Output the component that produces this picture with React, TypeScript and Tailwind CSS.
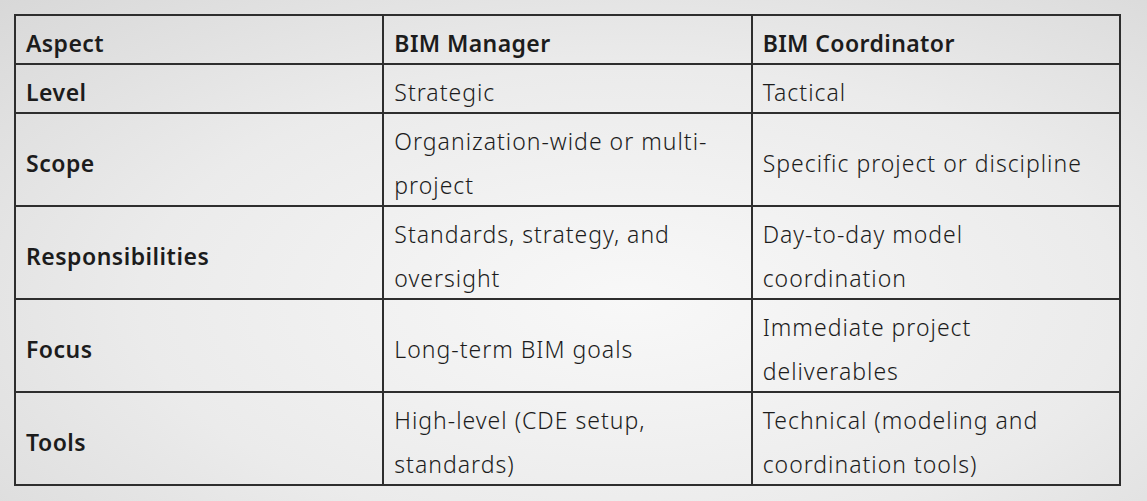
import React from 'react';

const rows = [
  { aspect: 'Level', manager: 'Strategic', coordinator: 'Tactical' },
  { aspect: 'Scope', manager: 'Organization-wide or multi-project', coordinator: 'Specific project or discipline' },
  { aspect: 'Responsibilities', manager: 'Standards, strategy, and oversight', coordinator: 'Day-to-day model coordination' },
  { aspect: 'Focus', manager: 'Long-term BIM goals', coordinator: 'Immediate project deliverables' },
  { aspect: 'Tools', manager: 'High-level (CDE setup, standards)', coordinator: 'Technical (modeling and coordination tools)' },
];

const cell = 'border-2 border-[#2e2e2e] px-[10px] pt-[5px] pb-0 align-middle';

export default function App() {
  return (
    <div
      className="w-[1147px] h-[501px] overflow-hidden bg-[radial-gradient(ellipse_at_55%_60%,#f8f8f8_0%,#ebebeb_55%,#d8d8d8_100%)] pt-[14px] pl-[14px]"
      style={{ fontFamily: '"Noto Sans", "Open Sans", sans-serif' }}
    >
      <table className="w-[1107px] table-fixed border-collapse border-2 border-[#262626] text-[23px] leading-[44px] text-[#1c1c1c]">
        <thead>
          <tr>
            {['Aspect', 'BIM Manager', 'BIM Coordinator'].map((h) => (
              <th key={h} className={`${cell} text-left font-semibold tracking-[0.4px]`}>
                <div className="-mb-[2px]">{h}</div>
              </th>
            ))}
          </tr>
        </thead>
        <tbody>
          {rows.map((row) => (
            <tr key={row.aspect}>
              <td className={`${cell} font-semibold tracking-[0.5px]`}>
                <div className="-mb-[2px]">{row.aspect}</div>
              </td>
              <td className={`${cell} font-light tracking-[1px]`}>
                <div className="-mb-[2px]">{row.manager}</div>
              </td>
              <td className={`${cell} font-light tracking-[1px]`}>
                <div className="-mb-[2px]">{row.coordinator}</div>
              </td>
            </tr>
          ))}
        </tbody>
      </table>
    </div>
  );
}
